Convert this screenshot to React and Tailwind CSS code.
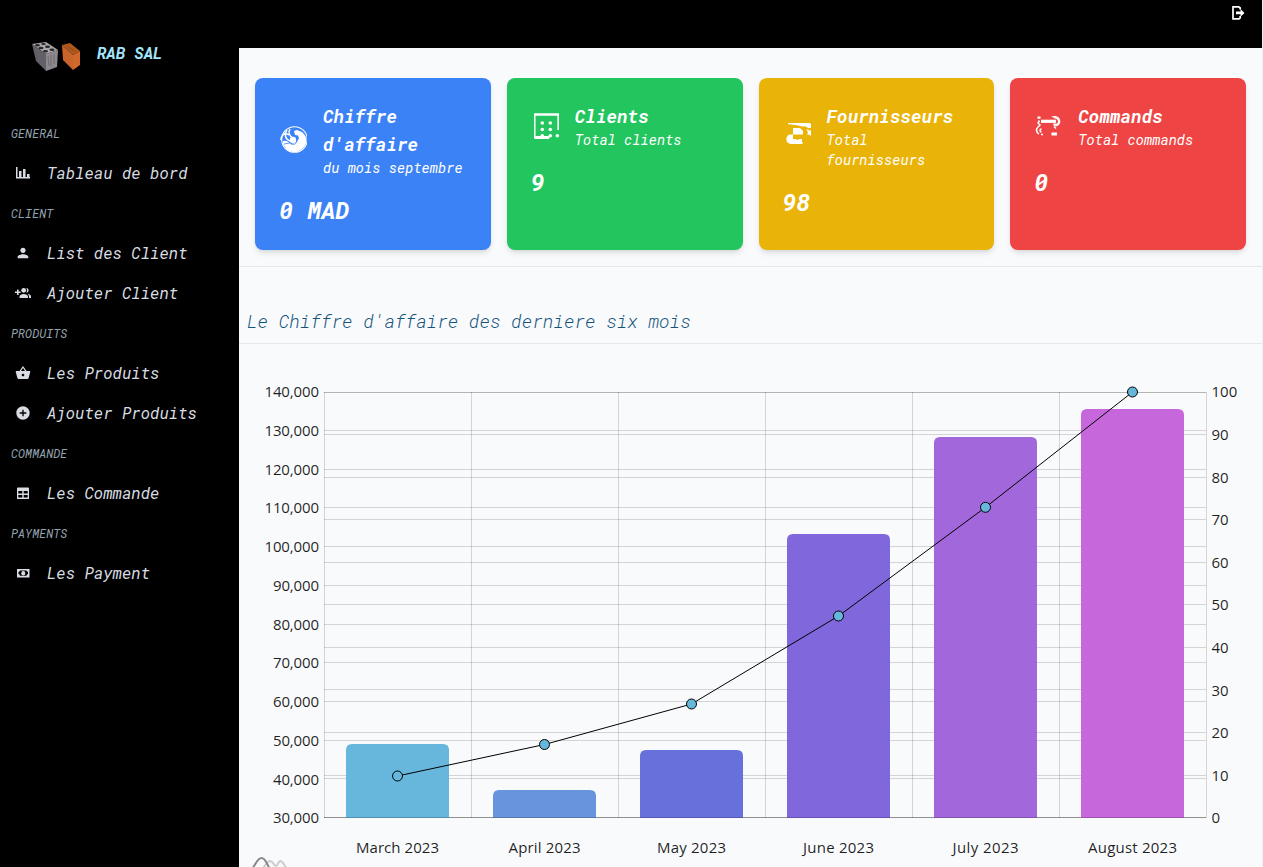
import React from "react";
import { MdPerson, MdShoppingBasket, MdAddCircle } from "react-icons/md";

const StatsIcon = () => (
  <svg width="16" height="16" viewBox="0 0 16 16" fill="currentColor" className="shrink-0">
    <path d="M1 2h1.500v11.500H1zM1 12h14v1.500H1zM4 6h2.500v6.500H4zM8 4h2.500v8.500H8zM12 9h2.500v4H12z" />
  </svg>
);
const GroupAddIcon = () => (
  <svg width="16" height="16" viewBox="0 0 16 16" fill="currentColor" className="shrink-0">
    <path d="M2 4.500h1.600v2h2v1.600h-2v2H2v-2H0V6.500h2z" />
    <circle cx="8.700" cy="5.300" r="2.400" />
    <path d="M11.300 3c3 0 3 4.600 0 4.600 1-1.500 1-3 0-4.600zM4.500 13v-1.500c0-3.500 8.500-3.500 8.500 0V13zM12.500 8.800c2 .3 3.500 1.200 3.500 2.700V13h-2v-1.500c0-1-.5-2-1.500-2.700z" />
  </svg>
);
const TableIcon = () => (
  <svg width="16" height="16" viewBox="0 0 16 16" fill="currentColor" fillRule="evenodd" className="shrink-0">
    <path d="M3 2.500h10a1 1 0 0 1 1 1v10a.500.500 0 0 1-.5.500H2.500a.500.500 0 0 1-.5-.5v-10a1 1 0 0 1 1-1zM3.300 6h4v2.500h-4zM8.700 6h4v2.500h-4zM3.300 10h4v2.500h-4zM8.700 10h4v2.500h-4z" />
  </svg>
);
const CashIcon = () => (
  <svg width="16" height="16" viewBox="0 0 16 16" fill="currentColor" fillRule="evenodd" className="shrink-0">
    <path d="M2 4h12.500v8.500H2zM5 5.500a2 2 0 0 1-1.500 1.500v2A2 2 0 0 1 5 10.700h6.500A2 2 0 0 1 13 9V7a2 2 0 0 1-1.500-1.500z" />
    <ellipse cx="8.250" cy="8.200" rx="2" ry="2.200" />
  </svg>
);

const LogoutIcon = () => (
  <svg width="16" height="16" viewBox="0 0 16 16" fill="none">
    <path d="M10.200 4.500V3L8.700 1.800H3v12h6l1.200-1V11" stroke="currentColor" strokeWidth="1.700" />
    <path d="M6 6.500h4.500V4l4 3.900-4 3.900V9.300H6z" fill="currentColor" />
  </svg>
);

const Logo = () => (
  <svg width="52" height="32" viewBox="0 0 52 32">
    <path d="M1 4l14-2 12 8-12 4z" fill="#aaa6a9" />
    <path d="M1 4l14 10v17L5 21z" fill="#625f66" />
    <path d="M15 14l12-4-1 17-11 4z" fill="#8d898e" />
    <path d="M17 16l1 10M20 15v12M23 14v10" stroke="#68656a" strokeWidth=".8" />
    <g fill="#292729">
      <ellipse cx="6.500" cy="5.200" rx="2.400" ry="1.200" />
      <ellipse cx="12.500" cy="4" rx="2.400" ry="1.100" />
      <ellipse cx="10" cy="8" rx="2.500" ry="1.300" />
      <ellipse cx="16.500" cy="6.700" rx="2.500" ry="1.200" />
      <ellipse cx="14.500" cy="11.300" rx="2.500" ry="1.300" />
      <ellipse cx="21" cy="9.700" rx="2.500" ry="1.200" />
    </g>
    <path d="M31 5l8-2 10 8-7 4z" fill="#b0561f" />
    <path d="M31 5l11 10v15L32 20z" fill="#c9652a" />
    <path d="M42 15l7-4v14l-7 5z" fill="#d0692b" />
    <path d="M37 7l7 4" stroke="#93491c" />
  </svg>
);

const GlobeIcon = () => (
  <svg width="28" height="28" viewBox="0 0 28 28" fill="none">
    <circle cx="15.500" cy="13.500" r="12.800" stroke="#fff" strokeWidth="1.100" />
    <path d="M15 5l3-1 5 2c6 5 6 12 0 17-5 4.500-12 4-17-1l5-3.500 6-2 3-4-1-3-3-.5z" fill="#fff" />
    <path d="M4 15c4-1 5 1 8 3l-1 3-4 1-3-4z" fill="#fff" />
    <path d="M8 4c-3 4-2 9 3 11M11 3c-2 3-1 7 3 9M2 14c0-5 4-8 8-5" stroke="#fff" strokeWidth="1.500" />
    <circle cx="14" cy="14" r="3.200" fill="#fff" />
    <path d="M12 9c4-1 6 1 6 5s-3 5-6 4M5 18l6-1" stroke="#3b82f6" strokeWidth=".8" />
  </svg>
);
const BuildingIcon = () => (
  <svg width="28" height="28" viewBox="0 0 28 28" fill="none">
    <path d="M27.700 18V2.500H3.800" stroke="#fff" strokeWidth="2.600" strokeLinejoin="round" />
    <path d="M3.800 1.500V26" stroke="#fff" strokeWidth="1.500" />
    <path d="M4.500 25.500H17" stroke="#fff" strokeWidth="3" strokeLinecap="round" />
    <g fill="#fff">
      <circle cx="11.300" cy="11" r="1.800" /><circle cx="19.300" cy="11" r="1.800" />
      <circle cx="11.300" cy="17.500" r="1.800" /><circle cx="19.300" cy="17.500" r="1.800" />
      <circle cx="11.300" cy="23.800" r="1.800" /><circle cx="19.300" cy="23.800" r="1.800" /><circle cx="26.300" cy="23.800" r="1.700" />
    </g>
  </svg>
);
const SupplierIcon = () => (
  <svg width="28" height="28" viewBox="0 0 28 28" fill="#fff">
    <path d="M5 1h21.500q1.500 0 1.500 1.500V6h-3l-2-1.500h-4C14 3 10 2.800 5 2.300z" />
    <path d="M10 6h7l3 3v3.500H10zM23.500 7.500h2.300v1.600L28 8v6l-2-1.500h-2l1-2z" />
    <path d="M7 12.500h3v4.500h9v3l1 1-1 1H8C2 22 2 13 7 12.500z" />
    <circle cx="14.500" cy="17.300" r="1" fill="#eab308" />
  </svg>
);
const CommandIcon = () => (
  <svg width="28" height="28" viewBox="0 0 28 28" fill="none">
    <path d="M7 9.300h15" stroke="#fff" strokeWidth="3.200" />
    <path d="M3.500 4.500h3v2.300h-3zM17 4.500l5-.5-2 2zM17.500 20.500H23v3h-5.500z" fill="#fff" />
    <path d="M20.500 5c6 1 6 8 1 8l-2-1" stroke="#fff" strokeWidth="2.400" />
    <path d="M5.500 8.500L4 11l2 2-2 2c-2.500 2-1.500 6 1 7M7.500 17c-2 0-2 3 0 3M20 14.500l2 2M7 22.500h2" stroke="#fff" strokeWidth="1.500" />
  </svg>
);

const groups = [
  ["GENERAL", [["Tableau de bord", StatsIcon]]],
  ["CLIENT", [["List des Client", MdPerson], ["Ajouter Client", GroupAddIcon]]],
  ["PRODUITS", [["Les Produits", MdShoppingBasket], ["Ajouter Produits", MdAddCircle]]],
  ["COMMANDE", [["Les Commande", TableIcon]]],
  ["PAYMENTS", [["Les Payment", CashIcon]]],
];

const cards = [
  ["Chiffre d'affaire", "du mois septembre", "0 MAD", "bg-[#3b82f6]", GlobeIcon],
  ["Clients", "Total clients", "9", "bg-[#22c55e]", BuildingIcon],
  ["Fournisseurs", "Total fournisseurs", "98", "bg-[#eab308]", SupplierIcon],
  ["Commands", "Total commands", "0", "bg-[#ef4444]", CommandIcon],
];

/* label, bar top, bar colour, line point, label width */
const bars = [
  ["March 2023", 744, "#67b7dc", 776, 83],
  ["April 2023", 790, "#6794dc", 744.5, 72],
  ["May 2023", 750, "#6771dc", 704, 69],
  ["June 2023", 534, "#8067dc", 616, 71],
  ["July 2023", 437, "#a367dc", 507.3, 66],
  ["August 2023", 409, "#c767dc", 392, 89],
];

const cx = (i) => 397.5 + 147 * i;
const gridY = (i, step, last) => (i === last ? 392.5 : Math.ceil(817.6 - i * step) - 0.5);

function Chart() {
  return (
    <svg className="block w-full not-italic" height="523" viewBox="239 344 1023 523" fontFamily="'Segoe UI','Open Sans','Noto Sans',sans-serif" fontSize="15" fill="#000">
      <g stroke="#000" strokeOpacity=".15">
        {Array.from({ length: 12 }, (_, i) => (
          <path key={i} d={`M324 ${gridY(i, 38.7, 11)}H1206`} />
        ))}
        {Array.from({ length: 11 }, (_, i) => (
          <path key={i} d={`M324 ${gridY(i, 42.55, 10)}H1206`} />
        ))}
        {Array.from({ length: 7 }, (_, i) => (
          <path key={i} d={`M${324.5 + 147 * i} 392V818`} />
        ))}
      </g>
      {bars.map(([label, top, color], i) => (
        <path key={label} fill={color} d={`M${cx(i) - 51.5} 818V${top + 6}q0-6 6-6h91q6 0 6 6V818z`} />
      ))}
      <path d="M324 817.500H1206" stroke="#000" strokeOpacity=".2" />
      <polyline fill="none" stroke="#000" points={bars.map((b, i) => `${cx(i)},${b[3]}`).join(" ")} />
      {bars.map((b, i) => (
        <circle key={b[0]} cx={cx(i)} cy={b[3]} r="5" fill="#67b7dc" stroke="#000" />
      ))}
      <g fillOpacity=".88">
        {Array.from({ length: 12 }, (_, i) => (
          <text key={i} x="319" y={823.3 - i * 38.727} textAnchor="end" textLength={i > 6 ? 54.5 : 46}>
            {`${30 + i * 10},000`}
          </text>
        ))}
        {Array.from({ length: 11 }, (_, i) => (
          <text key={i} x="1211.500" y={823.3 - i * 42.6}>{i * 10}</text>
        ))}
        {bars.map((b, i) => (
          <text key={b[0]} x={cx(i)} y="853" textAnchor="middle" textLength={b[4]}>{b[0]}</text>
        ))}
      </g>
      <g fill="none" strokeWidth="2" strokeLinecap="round">
        <path d="M263 868c3-3 4-7 7-7s4 5 6 5 2-5 4.500-5 3 4 6 7" stroke="#ccc" />
        <path d="M251 870c5-5 6-12 10.500-12s5 7 9.500 12" stroke="#888" />
      </g>
    </svg>
  );
}

export default function App() {
  return (
    <div className="flex h-[867px] w-[1263px] overflow-hidden border-r border-[#eeeff1] bg-[#f9fafc] font-['Roboto_Mono','Liberation_Mono',monospace] italic">
      <aside className="flex w-[239px] shrink-0 flex-col bg-black">
        <div className="flex h-[113px] items-start pl-[31px] pt-[40px]">
          <Logo />
          <span className="ml-[14px] mt-px text-base font-bold leading-6 tracking-[-0.05px] text-[#a5e5fb]">RAB SAL</span>
        </div>
        <nav>
          {groups.map(([title, items]) => (
            <section key={title}>
              <h2 className="flex h-10 items-center pl-[11px] text-xs text-[#94a3b0]">{title}</h2>
              {items.map(([label, Icon]) => (
                <a key={label} className="flex h-10 items-center gap-4 pl-[15px] text-base text-[#d9dce2]">
                  <Icon className="size-4 shrink-0" />
                  <span className="tracking-[-0.02px]">{label}</span>
                </a>
              ))}
            </section>
          ))}
        </nav>
      </aside>
      <div className="flex min-w-0 flex-1 flex-col">
        <header className="flex h-12 shrink-0 justify-end bg-black pr-4 pt-[5px] text-white">
          <LogoutIcon />
        </header>
        <main className="flex-1">
          <div className="grid grid-cols-4 gap-4 border-b border-[#e5e7eb] px-4 pb-4 pt-[30px]">
            {cards.map(([title, sub, value, color, Icon]) => (
              <article key={title} className={`h-[172px] rounded-lg p-6 text-white shadow-md ${color}`}>
                <div className="flex items-center">
                  <span className="mr-4 size-7 shrink-0"><Icon /></span>
                  <div>
                    <h3 className="text-lg font-bold leading-7">{title}</h3>
                    <p className="text-sm">{sub}</p>
                  </div>
                </div>
                <p className="mt-4 text-2xl font-bold">{value}</p>
              </article>
            ))}
          </div>
          <h2 className="flex h-[77px] items-end border-b border-[#e5e7eb] px-2 pb-2 text-lg font-light leading-7 text-[#14547c]">
            Le Chiffre d'affaire des derniere six mois
          </h2>
          <Chart />
        </main>
      </div>
    </div>
  );
}
